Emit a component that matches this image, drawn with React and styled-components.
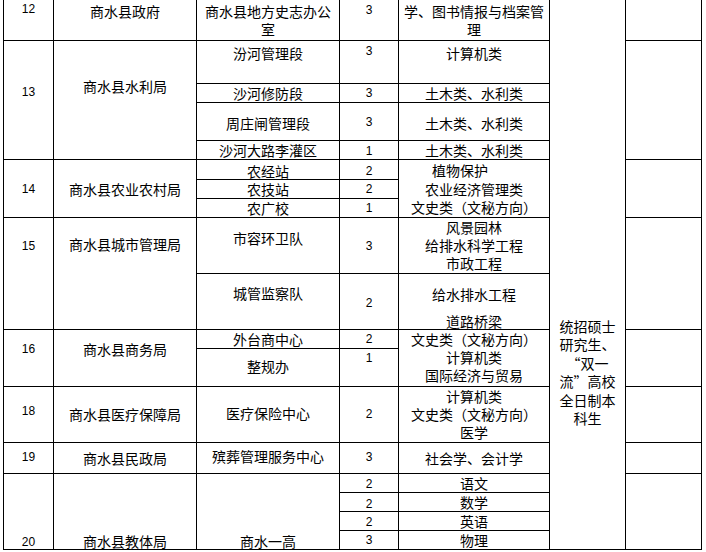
import React from "react";
import styled, { createGlobalStyle } from "styled-components";

const GlobalStyle = createGlobalStyle`
  html, body { margin: 0; padding: 0; background: #fff; }
  body { font-family: "Noto Sans CJK SC", sans-serif; overflow: hidden; }
`;

const Page = styled.div`
  padding-left: 3px;
`;

const Table = styled.div`
  display: grid;
  grid-template-columns: 49px 142px 142px 58px 150px 75px 75px;
  grid-template-rows: 40px 42px 18px 37px 18px 19px 18px 18px 55px 55px 18px 37px 55px 30px 18px 18px 18px 18px;
  gap: 1px;
  background: #000;
  padding: 0 1px 1px 1px;
  width: max-content;
`;

const Cell = styled.div`
  grid-column: ${(p) => p.$c} / span 1;
  grid-row: ${(p) => p.$r} / span ${(p) => p.$rs || 1};
  background: #fff;
  box-sizing: border-box;
  padding: ${(p) => p.$pt || 0}px 2px 0;
  text-align: center;
  color: #000;
  font-family: ${(p) =>
    p.$num ? '"Liberation Sans", Arial, sans-serif' : '"Noto Sans CJK SC", sans-serif'};
  font-size: ${(p) => (p.$num ? 12 : 14)}px;
  line-height: ${(p) => p.$lh || 18}px;
`;

const Line = styled.span`
  display: block;
  margin-top: ${(p) => p.$mt || 0}px;
  padding-right: ${(p) => p.$pr || 0}px;
  white-space: nowrap;
`;

// [col, row, rowspan, content, paddingTop, isNumber, lineHeight]
const cells = [
  // 12
  [1, 1, 1, "12", 0, true],
  [2, 1, 1, "商水县政府", 1.5],
  [3, 1, 1, "商水县地方史志办公室", 1.5],
  [4, 1, 1, "3", 1, true],
  [5, 1, 1, "学、图书情报与档案管理", 1.5],
  [7, 1, 1, ""],
  // 13
  [1, 2, 4, "13", 42, true],
  [2, 2, 4, "商水县水利局", 35.5],
  [3, 2, 1, "汾河管理段", 2.5],
  [4, 2, 1, "3", 1, true],
  [5, 2, 1, "计算机类", 2.5],
  [3, 3, 1, "沙河修防段", 0],
  [4, 3, 1, "3", 0, true],
  [5, 3, 1, "土木类、水利类", 0],
  [3, 4, 1, "周庄闸管理段", 10.5],
  [4, 4, 1, "3", 10, true],
  [5, 4, 1, "土木类、水利类", 10.5],
  [3, 5, 1, "沙河大路李灌区", 0],
  [4, 5, 1, "1", 1, true],
  [5, 5, 1, "土木类、水利类", 0],
  [7, 2, 4, ""],
  // 14
  [1, 6, 3, "14", 20, true],
  [2, 6, 3, "商水县农业农村局", 19.5],
  [3, 6, 1, "农经站", 1.5],
  [3, 7, 1, "农技站", 0],
  [3, 8, 1, "农广校", 0],
  [4, 6, 1, "2", 2, true],
  [4, 7, 1, "2", 0, true],
  [4, 8, 1, "1", 0, true],
  [5, 6, 3, [{ t: "植物保护", pr: 28 }, { t: "农业经济管理类" }, { t: "文史类（文秘方向）" }], 1, false, 18.5],
  [7, 6, 3, ""],
  // 15
  [1, 9, 2, "15", 19, true],
  [2, 9, 2, "商水县城市管理局", 16.5],
  [3, 9, 1, "市容环卫队", 10.5],
  [3, 10, 1, "城管监察队", 9.5],
  [4, 9, 1, "3", 19, true],
  [4, 10, 1, "2", 20, true],
  [5, 9, 1, [{ t: "风景园林" }, { t: "给排水科学工程" }, { t: "市政工程" }], 0, false, 18],
  [5, 10, 1, [{ t: "给水排水工程" }, { t: "道路桥梁", mt: 9 }], 10.5],
  [7, 9, 2, ""],
  // 16
  [1, 11, 2, "16", 10, true],
  [2, 11, 2, "商水县商务局", 9.5],
  [3, 11, 1, "外台商中心", 0],
  [3, 12, 1, "整规办", 7.5],
  [4, 11, 1, "2", 0, true],
  [4, 12, 1, "1", 0, true],
  [5, 11, 2, [{ t: "文史类（文秘方向）" }, { t: "计算机类" }, { t: "国际经济与贸易" }], 0],
  [7, 11, 2, ""],
  // 18
  [1, 13, 1, "18", 15, true],
  [2, 13, 1, "商水县医疗保障局", 17.5],
  [3, 13, 1, "医疗保险中心", 16.5],
  [4, 13, 1, "2", 18, true],
  [5, 13, 1, [{ t: "计算机类" }, { t: "文史类（文秘方向）" }, { t: "医学" }], 0, false, 18],
  [7, 13, 1, ""],
  // 19
  [1, 14, 1, "19", 5, true],
  [2, 14, 1, "商水县民政局", 5.5],
  [3, 14, 1, "殡葬管理服务中心", 3.5],
  [4, 14, 1, "3", 5, true],
  [5, 14, 1, "社会学、会计学", 5.5],
  [7, 14, 1, ""],
  // 20
  [1, 15, 4, "20", 61, true, 14],
  [2, 15, 4, "商水县教体局", 59, false, 16],
  [3, 15, 4, "商水一高", 59, false, 16],
  [4, 15, 1, "2", 1, true],
  [4, 16, 1, "2", 2, true],
  [4, 17, 1, "2", 1, true],
  [4, 18, 1, "3", 0, true],
  [5, 15, 1, "语文", 0],
  [5, 16, 1, "数学", 0],
  [5, 17, 1, "英语", 0],
  [5, 18, 1, "物理", 0],
  [7, 15, 4, ""],
  // requirement column
  [6, 1, 18, [{ t: "统招硕士" }, { t: "研究生、" }, { t: "“双一" }, { t: "流”高校" }, { t: "全日制本" }, { t: "科生" }], 316.5, false, 18.5],
];

export default function App() {
  return (
    <>
      <GlobalStyle />
      <Page>
        <Table>
          {cells.map(([c, r, rs, content, pt, num, lh], i) => (
            <Cell key={i} $c={c} $r={r} $rs={rs} $pt={pt} $num={num} $lh={lh}>
              {Array.isArray(content)
                ? content.map((l, j) => (
                    <Line key={j} $mt={l.mt} $pr={l.pr}>
                      {l.t}
                    </Line>
                  ))
                : content}
            </Cell>
          ))}
        </Table>
      </Page>
    </>
  );
}
